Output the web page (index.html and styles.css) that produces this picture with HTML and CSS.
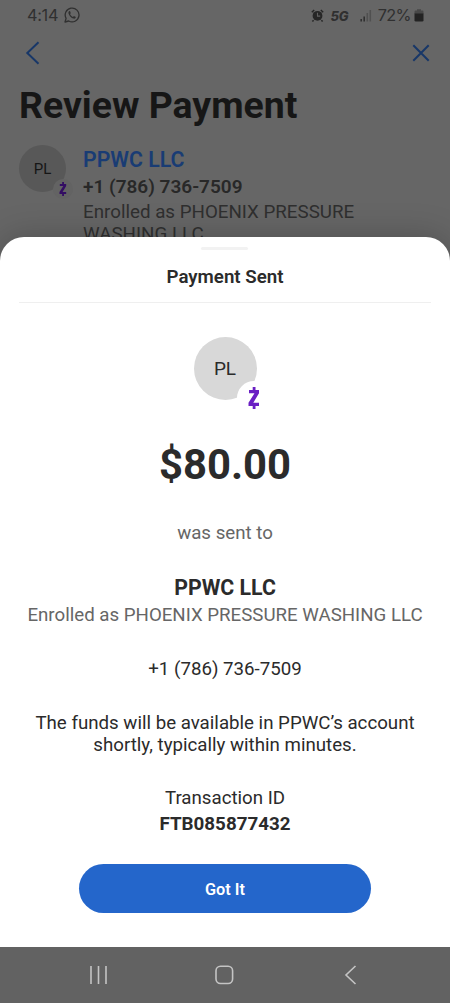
FILE: index.html
```html
<!DOCTYPE html>
<html lang="en">
<head>
<meta charset="utf-8">
<title>Payment Sent</title>
<link rel="stylesheet" href="styles.css">
</head>
<body>
<div class="phone">
  <main class="review">
    <div class="status">
      <span class="clock">4:14</span>
      <svg class="chat" width="16" height="16" viewBox="0 0 16 16"><path d="M1 15l1.100-3.600A6.900 6.900 0 1 1 4.700 14z" fill="none" stroke="#303030" stroke-width="1.300" stroke-linejoin="round"/><path d="M5.400 4.100c-.9.4-1.200 1.400-.8 2.600.7 2.200 2.600 4.200 4.900 4.900 1.300.3 2.200-.3 2.300-1.500L9.900 9l-.9 1C7.700 9.500 6.600 8.400 6 7.100l.8-.9-.7-2z" fill="#303030"/></svg>
      <span class="spacer"></span>
      <svg class="alarm" width="13" height="13" viewBox="0 0 13 13"><circle cx="6.500" cy="6.800" r="4.900" fill="#262626"/><path d="M.8 3.200L3.200 1M12.200 3.200L9.800 1M2.600 11.200l-1.200 1.300M10.400 11.200l1.200 1.300" stroke="#262626" stroke-width="1.500"/><path d="M6.500 3.800v3.300h2.700" fill="none" stroke="#606060" stroke-width="1.100"/></svg>
      <span class="network">5G</span>
      <svg class="signal" width="12" height="13" viewBox="0 0 12 13"><path d="M1.200 10v2.500M4.200 7.500v5" stroke="#303030" stroke-width="1.600"/><path d="M7.300 4v8.500M10.300 1v11.500" stroke="#505050" stroke-width="1.600"/></svg>
      <span class="charge">72%</span>
      <svg class="battery" width="10" height="13" viewBox="0 0 10 13"><path d="M3 .3h4v1.200h1.200q1.300 0 1.300 1.300V5H.5V2.800q0-1.300 1.300-1.300H3z" fill="#484848"/><path d="M.5 4.500h9v6.700q0 1.300-1.300 1.300H1.800Q.5 12.500.5 11.200z" fill="#232323"/></svg>
    </div>
    <div class="toolbar">
      <svg width="16" height="26" viewBox="0 0 16 26"><path d="M13.500 2.300L2.300 13l11.200 10.700" fill="none" stroke="#183768" stroke-width="2"/></svg>
      <svg width="18" height="18" viewBox="0 0 18 18"><path d="M1.300 1.300l15.400 15.400M16.700 1.300L1.300 16.700" stroke="#183768" stroke-width="2"/></svg>
    </div>
    <h1 class="title">Review Payment</h1>
    <div class="recipient">
      <div class="avatar avatar-small">PL
        <span class="badge"><svg viewBox="0 0 12 22"><path d="M1 3h10v3.200L5.300 15.800H11V19H.5v-3.200L6.500 6.200H1zM4.700 0h2.800v4H4.700zM4.700 18h2.800v4H4.700z" fill="currentColor"/></svg></span>
      </div>
      <div class="details">
        <div class="payee">PPWC LLC</div>
        <div class="number">+1 (786) 736-7509</div>
        <div class="enrolled">Enrolled as PHOENIX PRESSURE WASHING LLC</div>
      </div>
    </div>
  </main>
  <section class="sheet">
    <div class="handle"></div>
    <h2 class="heading">Payment Sent</h2>
    <div class="avatar avatar-large">PL
      <span class="badge"><svg viewBox="0 0 12 22"><path d="M1 3h10v3.200L5.300 15.800H11V19H.5v-3.200L6.500 6.200H1zM4.700 0h2.800v4H4.700zM4.700 18h2.800v4H4.700z" fill="currentColor"/></svg></span>
    </div>
    <div class="amount">$80.00</div>
    <div class="sent">was sent to</div>
    <div class="name">PPWC LLC</div>
    <div class="business">Enrolled as PHOENIX PRESSURE WASHING LLC</div>
    <div class="phone-number">+1 (786) 736-7509</div>
    <p class="note">The funds will be available in PPWC’s account<br>shortly, typically within minutes.</p>
    <div class="id-label">Transaction ID</div>
    <div class="id">FTB085877432</div>
    <button class="confirm">Got It</button>
  </section>
  <nav class="nav">
    <svg width="20" height="20" viewBox="0 0 20 20"><path d="M2 1v18M9.500 1v18M17 1v18" stroke="#c4c4c4" stroke-width="1.600"/></svg>
    <svg width="20" height="20" viewBox="0 0 20 20"><rect x="1" y="1.300" width="16.600" height="17.200" rx="4.500" fill="none" stroke="#c4c4c4" stroke-width="1.600"/></svg>
    <svg width="20" height="20" viewBox="0 0 20 20"><path d="M14.500 1L5 10l9.500 9" fill="none" stroke="#c4c4c4" stroke-width="1.600"/></svg>
  </nav>
</div>
</body>
</html>
```
FILE: styles.css
```css
* { box-sizing: border-box; }
body { margin: 0; font-family: Roboto, "Liberation Sans", sans-serif; }
svg { display: block; flex: none; }
.phone { position: relative; display: flex; flex-direction: column; width: 450px; height: 1003px; overflow: hidden; background: #666; }
.review { height: 270px; overflow: hidden; color: #161616; }
.status { display: flex; align-items: center; height: 30px; padding: 0 26px 0 27px; color: #303030; }
.clock { font: 16.300px/30px Inter, sans-serif; letter-spacing: -.3px; }
.chat { margin-left: 6px; }
.spacer { flex: 1; }
.network { margin: 3px 0 0 6px; font: italic 800 13px/27px Inter, sans-serif; }
.signal { margin-left: 11px; }
.charge { margin-left: 6px; font: 16.300px/30px Inter, sans-serif; letter-spacing: -.6px; }
.battery { margin-left: 3px; }
.toolbar { display: flex; align-items: center; justify-content: space-between; height: 46px; padding: 0 20px 0 25px; }
.title { margin: 6px 0 0 19px; font-size: 37.400px; line-height: 46px; font-weight: 700; white-space: nowrap; }
.recipient { display: flex; margin: 17px 0 0 19px; gap: 17px; }
.avatar { position: relative; display: flex; flex: none; align-items: center; justify-content: center; border-radius: 50%; }
.badge { position: absolute; display: flex; align-items: center; justify-content: center; border-radius: 50%; }
.avatar-small { width: 47px; height: 47px; background: #585858; font-size: 15px; }
.avatar-small .badge { width: 20px; height: 20px; right: -7px; bottom: -7px; background: #636363; color: #330d63; }
.avatar-small .badge svg { width: 8px; height: 14px; }
.details { width: 310px; padding-top: 2px; }
.payee { font-size: 21.300px; line-height: 26px; font-weight: 600; color: #193c74; }
.number { font-size: 19px; line-height: 27px; font-weight: 600; color: #282828; }
.enrolled { padding-top: 1px; font-size: 18.750px; line-height: 22px; color: #2f2f2f; }
.sheet { position: absolute; top: 237px; left: 0; right: 0; height: 710px; display: flex; flex-direction: column; align-items: center; border-radius: 24px 24px 0 0; background: #fff; box-shadow: 0 0 34px rgba(0,0,0,.22); color: #2b2b2b; text-align: center; font-size: 18.700px; line-height: 22px; }
.handle { width: 47px; height: 3px; margin: 10px 2px 0 0; border-radius: 2px; background: #f2f2f2; }
.heading { width: 412px; height: 53px; margin: 0; border-bottom: 1px solid #efefef; font-size: 18.700px; line-height: 54px; font-weight: 600; }
.avatar-large { width: 63px; height: 63px; margin-top: 34px; background: #d8d8d8; font-size: 19px; line-height: 24px; }
.avatar-large .badge { width: 34px; height: 34px; left: 43px; top: 44px; background: #fff; color: #6a1fc4; }
.avatar-large .badge svg { width: 12px; height: 22px; }
.amount { margin-top: 40px; font-size: 41.800px; line-height: 50px; font-weight: 700; }
.sent { margin-top: 32px; color: #666; }
.name { margin-top: 32px; font-size: 21.300px; line-height: 24px; font-weight: 700; }
.business { margin-top: 4px; color: #666; white-space: nowrap; }
.phone-number { margin-top: 32px; }
.note { margin: 32px 0 0; white-space: nowrap; }
.id-label { margin-top: 31px; }
.id { margin-top: 4px; font-size: 18.800px; font-weight: 700; }
.confirm { width: 292px; height: 49px; margin-top: 29px; border: 0; border-radius: 25px; background: #2466cb; color: #fff; font: 600 16.300px/49px Roboto, sans-serif; }
.nav { position: relative; display: flex; align-items: center; justify-content: space-between; height: 56px; margin-top: auto; padding: 0 89px; background: #626262; }
```
